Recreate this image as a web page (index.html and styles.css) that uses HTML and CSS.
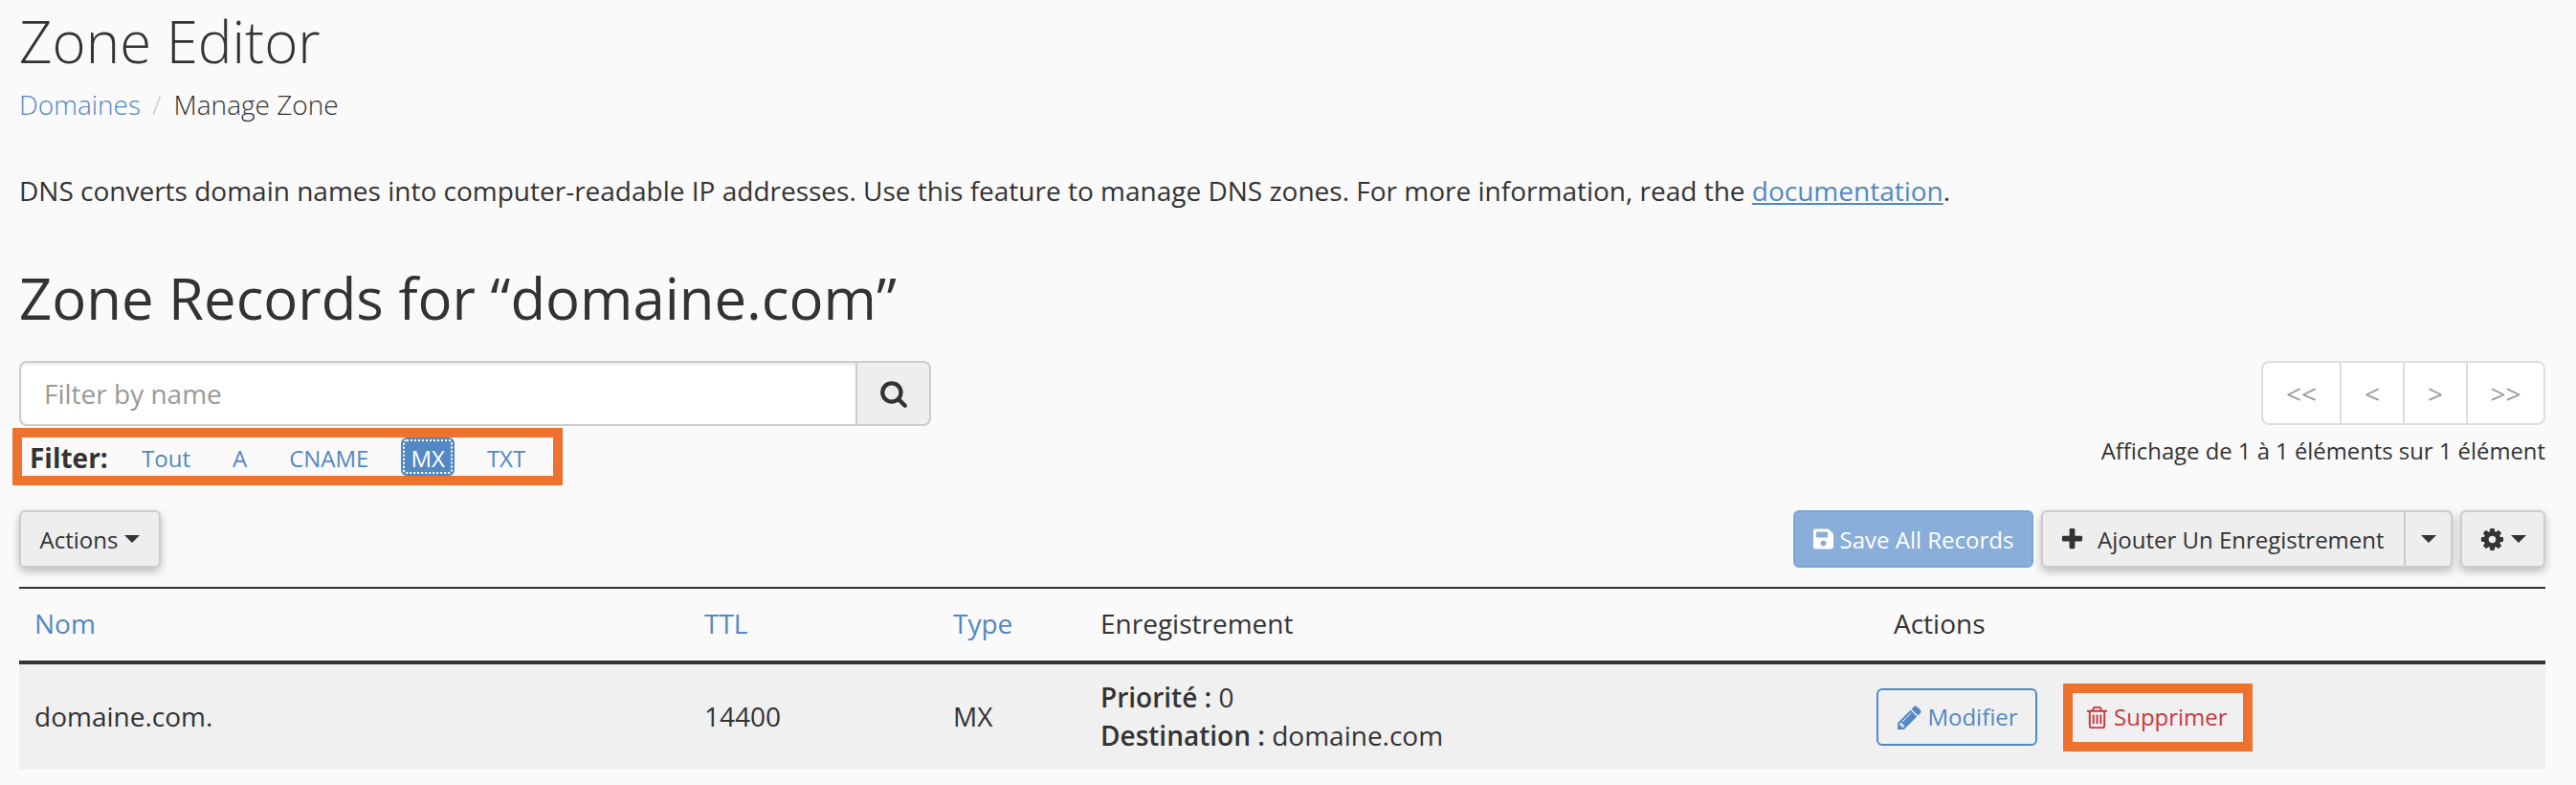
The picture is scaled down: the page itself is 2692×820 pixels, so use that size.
FILE: index.html
```html
<!DOCTYPE html>
<html lang="fr">
<head>
<meta charset="utf-8">
<title>Zone Editor</title>
<link rel="stylesheet" href="styles.css">
</head>
<body>
<svg class="defs" width="0" height="0" aria-hidden="true">
  <symbol id="i-search" viewBox="0 0 1792 1792"><path d="M1216 832q0-185-131.500-316.500t-316.500-131.500-316.500 131.500-131.500 316.500 131.500 316.500 316.500 131.500 316.500-131.500 131.500-316.500zm512 832q0 52-38 90t-90 38q-54 0-90-38l-343-342q-179 124-399 124-143 0-273.500-55.500t-225-150-150-225-55.500-273.500 55.500-273.500 150-225 225-150 273.500-55.500 273.500 55.500 225 150 150 225 55.500 273.500q0 220-124 399l343 343q37 37 37 90z"/></symbol>
  <symbol id="i-plus" viewBox="0 0 1792 1792"><path d="M1600 736v192q0 40-28 68t-68 28h-416v416q0 40-28 68t-68 28h-192q-40 0-68-28t-28-68v-416h-416q-40 0-68-28t-28-68v-192q0-40 28-68t68-28h416v-416q0-40 28-68t68-28h192q40 0 68 28t28 68v416h416q40 0 68 28t28 68z"/></symbol>
  <symbol id="i-cog" viewBox="0 0 1792 1792"><path d="M1152 896q0-106-75-181t-181-75-181 75-75 181 75 181 181 75 181-75 75-181zm512-109v222q0 12-8 23t-20 13l-185 28q-19 54-39 91 35 50 107 138 10 12 10 25t-9 23q-27 37-99 108t-94 71q-12 0-26-9l-138-108q-44 23-91 38-16 136-29 186-7 28-36 28h-222q-14 0-24.500-8.500t-11.500-21.500l-28-184q-49-16-90-37l-141 107q-10 9-25 9-14 0-25-11-126-114-165-168-7-10-7-23 0-12 8-23 15-21 51-66.500t54-70.500q-27-50-41-99l-183-27q-13-2-21-12.500t-8-23.500v-222q0-12 8-23t19-13l186-28q14-46 39-92-40-57-107-138-10-12-10-24 0-10 9-23 26-36 98.500-107.500t94.500-71.500q13 0 26 10l138 107q44-23 91-38 16-136 29-186 7-28 36-28h222q14 0 24.500 8.500t11.500 21.500l28 184q49 16 90 37l142-107q9-9 24-9 13 0 25 10 129 119 165 170 7 8 7 22 0 12-8 23-15 21-51 66.500t-54 70.500q26 50 41 98l183 28q13 2 21 12.500t8 23.500z"/></symbol>
  <symbol id="i-pencil" viewBox="0 0 1792 1792"><path d="M491 1536l91-91-235-235-91 91v107h128v128h107zm523-928q0-22-22-22-10 0-17 7l-542 542q-7 7-7 17 0 22 22 22 10 0 17-7l542-542q7-7 7-17zm-54-192l416 416-832 832h-416v-416zm683 96q0 53-37 90l-166 166-416-416 166-165q36-38 90-38 53 0 91 38l235 234q37 39 37 91z"/></symbol>
  <symbol id="i-trash" viewBox="0 0 1792 1792"><path d="M704 736v576q0 14-9 23t-23 9h-64q-14 0-23-9t-9-23v-576q0-14 9-23t23-9h64q14 0 23 9t9 23zm256 0v576q0 14-9 23t-23 9h-64q-14 0-23-9t-9-23v-576q0-14 9-23t23-9h64q14 0 23 9t9 23zm256 0v576q0 14-9 23t-23 9h-64q-14 0-23-9t-9-23v-576q0-14 9-23t23-9h64q14 0 23 9t9 23zm128 724v-948h-896v948q0 22 7 40.500t14.500 27 10.500 8.500h832q3 0 10.500-8.500t14.500-27 7-40.500zm-672-1076h448l-48-117q-7-9-17-11h-317q-10 2-17 11zm928 32v64q0 14-9 23t-23 9h-96v948q0 83-47 143.500t-113 60.500h-832q-66 0-113-58.500t-47-141.500v-952h-96q-14 0-23-9t-9-23v-64q0-14 9-23t23-9h309l70-167q15-37 54-63t79-26h320q40 0 79 26t54 63l70 167h309q14 0 23 9t9 23z"/></symbol>
  <symbol id="i-save" viewBox="0 0 448 512"><path d="M433.941 129.941l-83.882-83.882A48 48 0 0 0 316.118 32H48C21.49 32 0 53.49 0 80v352c0 26.510 21.490 48 48 48h352c26.510 0 48-21.490 48-48V163.882a48 48 0 0 0-14.059-33.941zM224 416c-35.346 0-64-28.654-64-64 0-35.346 28.654-64 64-64s64 28.654 64 64c0 35.346-28.654 64-64 64zm96-304.520V212c0 6.627-5.373 12-12 12H76c-6.627 0-12-5.373-12-12V108c0-6.627 5.373-12 12-12h228.520c3.183 0 6.235 1.264 8.485 3.515l3.480 3.480A11.996 11.996 0 0 1 320 111.480z"/></symbol>
</svg>

<h1 class="page-title">Zone Editor</h1>
<nav class="crumbs"><a href="#">Domaines</a><span class="crumb-sep">/</span><span>Manage Zone</span></nav>
<p class="intro">DNS converts domain names into computer-readable IP addresses. Use this feature to manage DNS zones. For more information, read the <a class="doc-link" href="#">documentation</a>.</p>
<h2 class="section-title">Zone Records for “domaine.com”</h2>

<div class="toolbar-top">
  <div class="toolbar-left">
    <div class="search">
      <input class="search-input" type="text" placeholder="Filter by name">
      <button class="search-btn" type="button"><svg class="icon icon-search"><use href="#i-search"/></svg></button>
    </div>
    <div class="filter-box">
      <strong class="filter-label">Filter:</strong>
      <a class="filter-item" href="#">Tout</a>
      <a class="filter-item" href="#">A</a>
      <a class="filter-item" href="#">CNAME</a>
      <a class="filter-item active" href="#">MX</a>
      <a class="filter-item" href="#">TXT</a>
    </div>
  </div>
  <div class="toolbar-right">
    <div class="pager">
      <span class="page-cell first">&lt;&lt;</span><span class="page-cell prev">&lt;</span><span class="page-cell next">&gt;</span><span class="page-cell last">&gt;&gt;</span>
    </div>
    <div class="page-info">Affichage de 1 à 1 éléments sur 1 élément</div>
  </div>
</div>

<div class="toolbar-actions">
  <button class="btn btn-raised btn-actions" type="button">Actions<span class="caret"></span></button>
  <div class="actions-right">
    <button class="btn btn-save" type="button"><svg class="icon icon-save"><use href="#i-save"/></svg>Save All Records</button>
    <div class="split btn-raised">
      <button class="split-main" type="button"><svg class="icon icon-plus"><use href="#i-plus"/></svg>Ajouter Un Enregistrement</button>
      <button class="split-caret" type="button"><span class="caret"></span></button>
    </div>
    <button class="btn btn-raised btn-gear" type="button"><svg class="icon icon-cog"><use href="#i-cog"/></svg><span class="caret"></span></button>
  </div>
</div>

<table class="records">
  <colgroup><col class="c-name"><col class="c-ttl"><col class="c-type"><col class="c-rec"><col class="c-act"></colgroup>
  <thead>
    <tr>
      <th><a href="#">Nom</a></th>
      <th><a href="#">TTL</a></th>
      <th><a href="#">Type</a></th>
      <th>Enregistrement</th>
      <th class="th-actions">Actions</th>
    </tr>
  </thead>
  <tbody>
    <tr>
      <td>domaine.com.</td>
      <td>14400</td>
      <td>MX</td>
      <td><div><strong>Priorité :</strong> 0</div><div><strong>Destination :</strong> domaine.com</div></td>
      <td class="td-actions">
        <div class="row-actions">
          <a class="btn-edit" href="#"><svg class="icon icon-pencil"><use href="#i-pencil"/></svg>Modifier</a>
          <a class="btn-delete" href="#"><svg class="icon icon-trash"><use href="#i-trash"/></svg>Supprimer</a>
        </div>
      </td>
    </tr>
  </tbody>
</table>
</body>
</html>
```

FILE: styles.css
```css
* { box-sizing: border-box; }
html, body { margin: 0; padding: 0; }
body {
  background: #fafafa;
  color: #333;
  font-family: "Open Sans", "Noto Sans", sans-serif;
  font-size: 28px;
  line-height: 40px;
  padding: 0 32px 0 20px;
  height: 820px;
  overflow: hidden;
}
a { color: #5288c4; text-decoration: none; }
strong { font-weight: 600; }
button { font-family: inherit; }
.defs { position: absolute; }
.icon { fill: currentColor; flex: none; display: block; }

.page-title {
  margin: 0;
  font-size: 60px;
  font-weight: 300;
  line-height: 86px;
}
.crumbs { display: flex; margin-top: 3px; font-weight: 300; height: 40px; }
.crumb-sep { color: #ccc; margin: 0 13px 0 12px; }
.intro { margin: 50px 0 0; height: 40px; }
.doc-link { text-decoration: underline; }
.section-title {
  margin: 49px 0 0;
  font-size: 59.85px;
  font-weight: 400;
  line-height: 86px;
}

.toolbar-top { display: flex; justify-content: space-between; margin-top: 23px; height: 130px; }
.toolbar-left { width: 953px; }
.search { display: flex; height: 68px; }
.search-input {
  flex: 1;
  min-width: 0;
  border: 2px solid #ccc;
  border-right: 0;
  border-radius: 8px 0 0 8px;
  background: #fff;
  box-shadow: inset 0 2px 2px rgba(0,0,0,.075);
  font: 28px "Open Sans", sans-serif;
  color: #333;
  padding: 0 24px;
  outline: 0;
}
.search-input::placeholder { color: #999; opacity: 1; }
.search-btn {
  width: 79px;
  border: 2px solid #ccc;
  border-radius: 0 8px 8px 0;
  background: #eee;
  color: #333;
  padding: 0;
  display: flex;
  align-items: center;
  justify-content: center;
}
.icon-search { width: 30px; height: 30px; }

.filter-box {
  display: flex;
  align-items: center;
  margin: 2px 0 0 -7px;
  width: 575px;
  height: 60px;
  border: 10px solid #ed722d;
  padding-left: 8px;
  font-size: 24px;
}
.filter-label { flex: none; font-size: 28px; font-weight: 700; width: 107px; height: 40px; line-height: 43px; }
.filter-item { flex: none; display: block; height: 40px; line-height: 43px; padding: 0 10px; border-radius: 6px; margin-right: 24px; }
.filter-item:last-child { margin-right: 0; }
.filter-item.active { background: #5288c4; color: #fff; outline: 2px dotted #fff; outline-offset: -4px; }

.toolbar-right { display: flex; flex-direction: column; align-items: flex-end; }
.pager {
  display: flex;
  width: 297px;
  height: 67px;
  border: 2px solid #ddd;
  border-radius: 8px;
  background: #fff;
  color: #999;
}
.page-cell { flex: none; display: flex; align-items: center; justify-content: center; border-right: 2px solid #ddd; width: 66px; }
.page-cell.first { width: 82px; }
.page-cell.last { border-right: 0; flex: 1; }
.page-info { margin-top: 7px; font-size: 23.85px; line-height: 40px; white-space: nowrap; }

.toolbar-actions { display: flex; justify-content: space-between; margin-top: 26px; height: 60px; }
.actions-right { display: flex; gap: 8px; }
.btn {
  height: 60px;
  border: 2px solid #ccc;
  border-radius: 6px;
  background: #eee;
  color: #333;
  font-size: 24px;
  padding: 0;
  display: flex;
  align-items: center;
  justify-content: center;
  white-space: nowrap;
}
.btn-raised { box-shadow: 0 4px 10px rgba(0,0,0,.25); }
.btn-actions { width: 148px; }
.caret {
  display: inline-block;
  width: 0; height: 0;
  border-left: 8px solid transparent;
  border-right: 8px solid transparent;
  border-top: 8px solid currentColor;
  margin-left: 7px;
}
.btn-save { width: 251px; background: #88aed9; border-color: #7ea6d4; color: #fff; }
.icon-save { width: 21px; height: 24px; margin-right: 7px; }
.split { display: flex; height: 60px; width: 430px; border: 2px solid #ccc; border-radius: 6px; background: #eee; }
.split-main, .split-caret { border: 0; background: transparent; color: #333; font-size: 24px; display: flex; align-items: center; padding: 0; white-space: nowrap; }
.split-main { flex: 1; padding-left: 17px; border-right: 2px solid #ccc; }
.split-caret { width: 47px; justify-content: center; }
.split-caret .caret { margin: 0; }
.icon-plus { width: 27px; height: 27px; margin-right: 13px; }
.btn-gear { width: 89px; }
.icon-cog { width: 27px; height: 27px; margin-right: -1px; }

.records { border-collapse: collapse; table-layout: fixed; width: 2640px; margin-top: 20px; }
.c-name { width: 700px; }
.c-ttl { width: 260px; }
.c-type { width: 154px; }
.c-rec { width: 827px; }
.c-act { width: 699px; }
.records th {
  text-align: left;
  font-weight: 400;
  height: 78px;
  padding: 0 16px 3px;
  border-top: 2px solid #333;
  border-bottom: 4px solid #333;
}
.records td { height: 112px; background: #f0f0f0; padding: 0 16px 3px; vertical-align: middle; }
.records .th-actions { padding-left: 18px; }
.records .td-actions { padding: 0; }
.row-actions { display: flex; align-items: center; }
.btn-edit {
  display: flex;
  align-items: center;
  justify-content: center;
  width: 168px;
  height: 60px;
  border: 2px solid #5288c4;
  border-radius: 6px;
  font-size: 24px;
}
.icon-pencil { width: 29px; height: 29px; margin-right: 4px; }
.btn-delete {
  display: flex;
  align-items: center;
  padding-left: 12px;
  width: 198px;
  height: 71px;
  margin-left: 27px;
  border: 10px solid #ed722d;
  color: #c9383f;
  font-size: 24px;
}
.icon-trash { width: 27px; height: 27px; margin-right: 4px; }
```
